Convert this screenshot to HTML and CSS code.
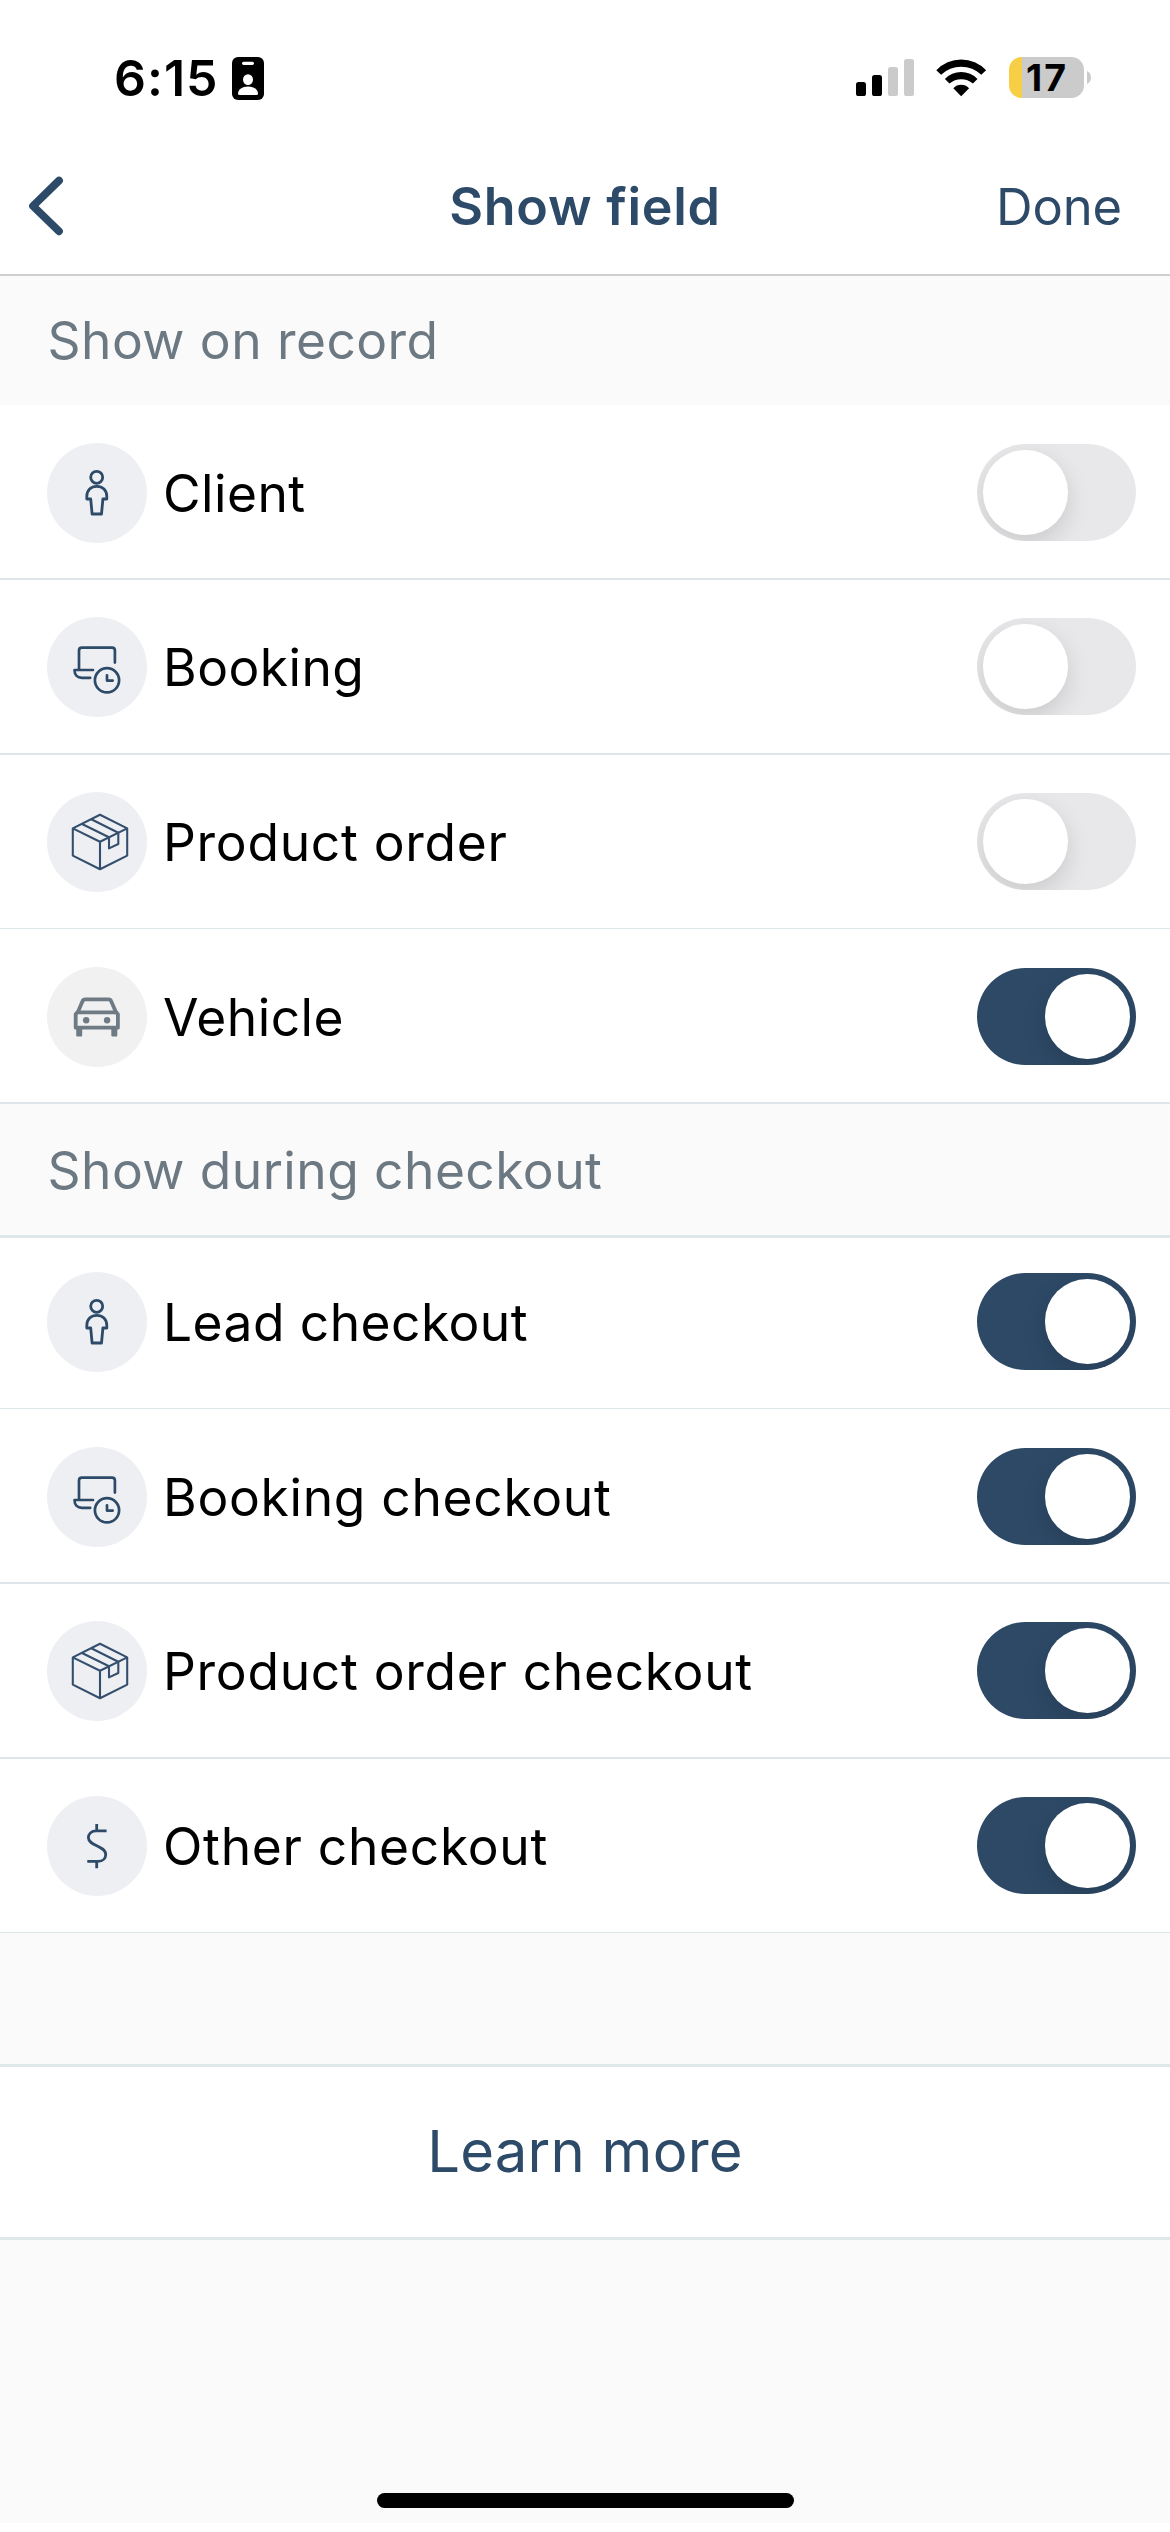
FILE: index.html
```html
<!DOCTYPE html>
<html lang="en">
<head>
<meta charset="utf-8">
<title>Show field</title>
<link rel="stylesheet" href="styles.css">
</head>
<body>
<svg class="sprite" aria-hidden="true">
  <symbol id="person" viewBox="0 0 100 100">
    <g fill="none" stroke="#2d4a68" stroke-width="2.8" stroke-linejoin="round">
      <circle cx="49.7" cy="34.3" r="6"/>
      <path d="M45.1 71 43.7 56H39.8V53.5C39.8 47.3 44 43.3 49.8 43.3S59.8 47.3 59.8 53.5V56H55.9L54.5 71Z"/>
    </g>
  </symbol>
  <symbol id="booking" viewBox="0 0 100 100">
    <g fill="none" stroke="#2d4a68" stroke-width="2.7" stroke-linecap="round" stroke-linejoin="round">
      <path d="M32 52V33.5Q32 30.6 34.8 30.6H65Q67.9 30.6 67.9 33.5V45.6"/>
      <path d="M46 53H27.5C27.5 58 30.5 60.8 35 60.8H43.2"/>
      <circle cx="60" cy="63.3" r="12.1"/>
      <path d="M60 58.3V63.6H65.7"/>
    </g>
  </symbol>
  <symbol id="box" viewBox="0 0 100 100">
    <g fill="none" stroke="#344f6e" stroke-width="2.1" stroke-linejoin="round">
      <path d="M53 22.8 80.2 36.4V63.6L53 77.2 25.8 63.6V36.4ZM25.8 36.4 53 49.8 80.2 36.4M53 49.8V77.2"/>
      <path d="M35 32 62 45.3V56.4L71.3 52V40.7L44.3 27.3"/>
    </g>
  </symbol>
  <symbol id="car" viewBox="0 0 100 100">
    <g fill="none" stroke="#6e7b85" stroke-width="3.8" stroke-linejoin="round">
      <path d="M30.8 45.3 35.4 34.5Q36.2 32.4 38.3 32.4H61.4Q63.5 32.4 64.3 34.5L69 45.3"/>
      <path d="M28.7 47.3 30.4 45.3H69.2L70.9 47.3V60.7H28.7Z"/>
    </g>
    <path fill="#6e7b85" d="M29.2 61H35.2V68.4Q35.2 69.4 34.2 69.4H30.2Q29.2 69.4 29.2 68.4ZM64.3 61H70.3V68.4Q70.3 69.4 69.3 69.4H65.3Q64.3 69.4 64.3 68.4Z"/>
    <circle cx="39.2" cy="53.3" r="3.2" fill="#6e7b85"/>
    <circle cx="60.1" cy="53.3" r="3.2" fill="#6e7b85"/>
  </symbol>
  <symbol id="dollar" viewBox="0 0 100 100">
    <path fill="none" stroke="#2d4a68" stroke-width="2.8" d="M59.6 34.9H49.5C44 34.9 41.4 38 41.4 41.8C41.4 50 58.7 49.5 58.7 58.4C58.7 62.4 56 65.3 51 65.3H40.3M49.7 28V34.9M49.7 65.3V72.3"/>
  </symbol>
</svg>

<header class="top">
  <div class="status">
    <div class="status-left">
      <span class="time">6:15</span>
      <svg class="badge" viewBox="0 0 32 43">
        <rect width="32" height="43" rx="6"/>
        <rect x="10" y="4.7" width="12" height="3.2" rx="1.6" fill="#fff"/>
        <ellipse cx="16" cy="22.6" rx="5" ry="5.4" fill="#fff"/>
        <path fill="#fff" d="M6 36.5C6 32.5 10.3 29.4 16 29.4S26 32.5 26 36.5Q26 38 24.5 38H7.5Q6 38 6 36.5Z"/>
      </svg>
    </div>
    <div class="status-right">
      <svg class="signal" viewBox="0 0 58 43">
        <rect x="0" y="25" width="10" height="14" rx="2.6"/>
        <rect x="16" y="18" width="10" height="21" rx="2.6"/>
        <rect x="32" y="10" width="10" height="29" rx="2.6" fill="#cbcbcb"/>
        <rect x="48" y="2" width="10" height="37" rx="2.6" fill="#cbcbcb"/>
      </svg>
      <svg class="wifi" viewBox="0 0 50.4 43">
        <path d="M.3 13.3A34 34 0 0 1 50.1 13.3L45.3 17.8A29 29 0 0 0 5.1 17.8ZM8.9 21.9A22.8 22.8 0 0 1 41.5 21.9L36.9 26.6A18 18 0 0 0 13.5 26.6ZM17.3 31.2A11 11 0 0 1 33.1 31.2L25.2 39.2Z"/>
      </svg>
      <div class="battery"><span class="battery-text">17</span></div>
      <svg class="nub" viewBox="0 0 4 13"><path fill="#cbcbcb" d="M0 0C2.4.8 4 3.4 4 6.5S2.4 12.2 0 13Z"/></svg>
    </div>
  </div>
  <nav class="nav">
    <svg class="back" viewBox="0 0 36 62"><path d="M31 5.6 5 31 31 56.3"/></svg>
    <h1 class="title">Show field</h1>
    <span class="done">Done</span>
  </nav>
</header>

<main>
  <h2 class="section">Show on record</h2>
  <div class="row"><svg class="icon"><use href="#person"/></svg><span class="label">Client</span><span class="toggle"></span></div>
  <div class="row low"><svg class="icon"><use href="#booking"/></svg><span class="label">Booking</span><span class="toggle"></span></div>
  <div class="row low thin"><svg class="icon"><use href="#box"/></svg><span class="label wide">Product order</span><span class="toggle"></span></div>
  <div class="row"><svg class="icon gray"><use href="#car"/></svg><span class="label">Vehicle</span><span class="toggle on"></span></div>

  <h2 class="section ruled">Show during checkout</h2>
  <div class="row first thin"><svg class="icon"><use href="#person"/></svg><span class="label">Lead checkout</span><span class="toggle on"></span></div>
  <div class="row"><svg class="icon"><use href="#booking"/></svg><span class="label wide">Booking checkout</span><span class="toggle on"></span></div>
  <div class="row low"><svg class="icon"><use href="#box"/></svg><span class="label wide">Product order checkout</span><span class="toggle on"></span></div>
  <div class="row low thin last"><svg class="icon"><use href="#dollar"/></svg><span class="label wide">Other checkout</span><span class="toggle on"></span></div>

  <div class="learn">Learn more</div>
</main>

<footer class="bottom"><div class="home"></div></footer>
</body>
</html>
```
FILE: styles.css
```css
* { box-sizing: border-box; }

body {
  margin: 0;
  width: 1170px;
  height: 2532px;
  display: flex;
  flex-direction: column;
  background: #fff;
  font-family: Inter, "Liberation Sans", sans-serif;
  font-size: 51.5px;
  letter-spacing: 0.45px;
  color: #000;
  overflow: hidden;
}

svg { display: block; flex: none; }
.sprite { width: 0; height: 0; position: absolute; }

.top {
  height: 276px;
  border-bottom: 2px solid #cfcfcf;
}

.status {
  height: 136px;
  padding: 57px 79px 0 114px;
  display: flex;
  justify-content: space-between;
  align-items: flex-start;
}
.status-left, .status-right { display: flex; align-items: flex-start; }
.time {
  width: 118px;
  font-size: 50px;
  font-weight: 600;
  line-height: 42px;
  letter-spacing: 0.98px;
}
.badge { width: 32px; height: 43px; }
.signal { width: 58px; height: 43px; }
.wifi { width: 50.4px; height: 43px; margin-left: 22.3px; }
.battery {
  width: 75px;
  height: 41px;
  margin-left: 22.3px;
  padding-left: 17px;
  border-radius: 12.5px;
  background: linear-gradient(90deg, #f6cf46 13px, #cbcbcb 13px);
}
.battery-text {
  display: block;
  font-size: 37.5px;
  font-weight: 700;
  line-height: 42px;
  letter-spacing: 2.1px;
}
.nub { width: 4px; height: 13px; margin: 14px 0 0 3px; }

.nav {
  height: 138px;
  padding: 2px 48px 0 28px;
  display: grid;
  grid-template-columns: 220px 1fr 200px;
  align-items: center;
  color: #2d4a68;
}
.back {
  width: 36px;
  height: 62px;
  fill: none;
  stroke: #2d4a68;
  stroke-width: 7.8;
  stroke-linecap: round;
  stroke-linejoin: round;
}
.title {
  margin: 1px 0 0;
  text-align: center;
  font-size: 52px;
  font-weight: 600;
  letter-spacing: 0.74px;
}
.done {
  text-align: right;
  font-size: 50.7px;
  letter-spacing: -0.1px;
}

.section {
  margin: 0;
  height: 129px;
  padding-left: 47.5px;
  line-height: 129px;
  font-size: inherit;
  font-weight: 400;
  color: #6c7982;
  background: #fafafa;
}
.section.ruled {
  height: 134px;
  line-height: 132px;
  border-bottom: 3px solid #dfe8e9;
}

.row {
  height: 175px;
  padding: 38px 34px 0 47px;
  display: flex;
  align-items: flex-start;
  border-bottom: 2px solid #dfe6e9;
}
.row.low { padding-top: 37px; }
.row.thin { height: 174px; border-bottom-width: 1px; }
.row.first { height: 171px; padding-top: 34px; }

.icon {
  width: 100px;
  height: 100px;
  border-radius: 50%;
  background: #eeeff3;
}
.icon.gray { background: #f1f1f1; }
.label {
  flex: 1;
  padding-left: 16px;
  line-height: 101px;
}
.label.wide { letter-spacing: 0.7px; }

.toggle {
  width: 159px;
  height: 97px;
  margin-top: 1px;
  padding: 6.3px;
  display: flex;
  border-radius: 48.5px;
  background: #e8e8ea;
  overflow: hidden;
}
.toggle::before {
  content: "";
  width: 84.4px;
  height: 84.4px;
  border-radius: 50%;
  background: #fff;
  box-shadow: 0 9px 24px rgba(0, 0, 0, 0.13);
}
.toggle.on { background: #2d4966; justify-content: flex-end; }

.learn {
  height: 176px;
  border-top: 3px solid #dfe8e9;
  border-bottom: 3px solid #dfe8e9;
  background: #fff;
  text-align: center;
  font-size: 58px;
  letter-spacing: 0.23px;
  line-height: 169px;
  color: #2d4a68;
}
.row.last { margin-bottom: 131px; }
main { background: linear-gradient(#fff 1657px, #fafafa 1657px); }

.bottom {
  height: 283px;
  padding-top: 253px;
  background: #fafafa;
}
.home {
  width: 417px;
  height: 15px;
  margin: 0 auto;
  border-radius: 7.5px;
  background: #000;
}
```
